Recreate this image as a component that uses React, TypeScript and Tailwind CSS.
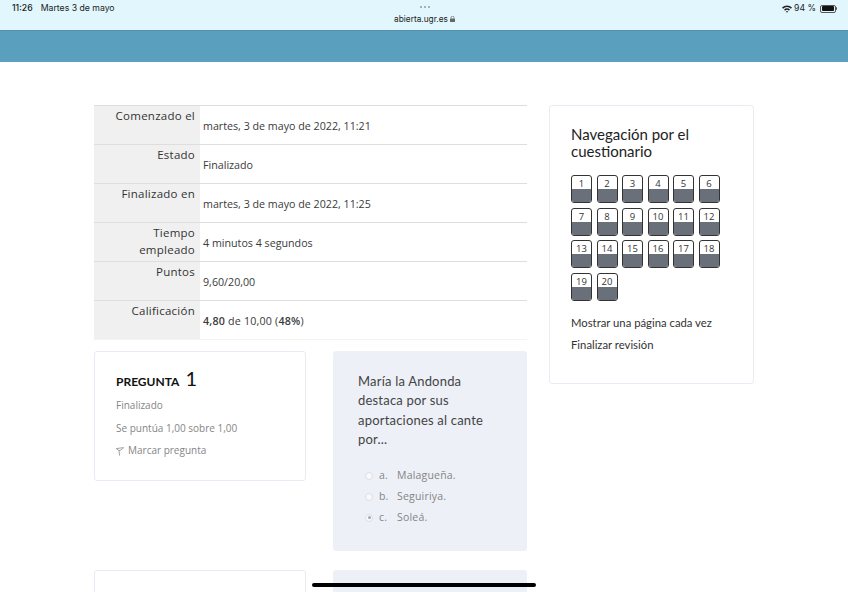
const openSans = '[font-family:"Open_Sans",sans-serif]';
const headFont = '[font-family:Lato,sans-serif]';

const summary = [
  { label: ['Comenzado el'], value: 'martes, 3 de mayo de 2022, 11:21' },
  { label: ['Estado'], value: 'Finalizado' },
  { label: ['Finalizado en'], value: 'martes, 3 de mayo de 2022, 11:25' },
  { label: ['Tiempo', 'empleado'], value: '4 minutos 4 segundos' },
  { label: ['Puntos'], value: '9,60/20,00' },
];

const answers = [
  { key: 'a.', text: 'Malagueña.' },
  { key: 'b.', text: 'Seguiriya.' },
  { key: 'c.', text: 'Soleá.', checked: true },
];

function SummaryRow({ label, children }: { label: string[]; children: React.ReactNode }) {
  return (
    <div className="flex h-[39px] border-t border-[#dedede]">
      <div className="w-[106px] shrink-0 bg-[#f0f0f0] pr-[5px] pt-[1px] text-right text-[11.5px] leading-[17px] tracking-[0.25px] text-[#333]">
        {label.map((l) => (
          <div key={l}>{l}</div>
        ))}
      </div>
      <div className="pl-[3px] pt-[13px] text-[10.7px] leading-[15px] text-[#3a3a3a]">{children}</div>
    </div>
  );
}

function QuizButton({ n }: { n: number }) {
  return (
    <div className="h-[28px] w-[21px] overflow-hidden rounded-[3px] border border-[#333] bg-white">
      <div className="h-[13px] pt-[2px] text-center text-[9.5px] leading-[11px] text-[#333]">{n}</div>
      <div className="h-[14px] bg-[#6a7079]" />
    </div>
  );
}

function FlagIcon() {
  return (
    <svg width="8" height="9" viewBox="0 0 8 9" fill="none" stroke="#8a8a8a" strokeWidth="0.8" className="mr-[4px] mt-[4px]">
      <path d="M0.3 1.6 L7.6 0.6 L5.2 3 L3 3.6 Z" />
      <path d="M3 3.6 L3.6 8.6" />
    </svg>
  );
}

export default function App() {
  return (
    <div className={`relative h-[592px] w-[848px] overflow-hidden bg-white ${openSans}`}>
      {/* status bar */}
      <div className="grid h-[30px] grid-cols-3 items-start bg-[#e1f7fd] pl-[12px] pr-[11px] pt-[3px] text-[8.7px] leading-[11px] text-[#222] [font-family:Inter,sans-serif]">
        <div className="flex gap-[8px]">
          <span className="font-medium">11:26</span>
          <span>Martes 3 de mayo</span>
        </div>
        <div className="flex flex-col items-center pt-[3px]">
          <div className="flex gap-[2px]">
            <span className="h-[2px] w-[2px] rounded-full bg-[#999]" />
            <span className="h-[2px] w-[2px] rounded-full bg-[#999]" />
            <span className="h-[2px] w-[2px] rounded-full bg-[#999]" />
          </div>
          <div className="mt-[6px] flex items-center gap-[2px] text-[8.3px] leading-[10px]">
            abierta.ugr.es
            <svg width="5" height="6" viewBox="0 0 5 6">
              <rect x="0" y="2.5" width="5" height="3.5" rx="0.5" fill="#666" />
              <path d="M1 2.5V1.6a1.5 1.5 0 0 1 3 0v0.9" fill="none" stroke="#666" strokeWidth="0.7" />
            </svg>
          </div>
        </div>
        <div className="flex items-center justify-end gap-[2px]">
          <svg width="10" height="8" viewBox="0 0 10 8" fill="#222">
            <path d="M0 2.6 A7 7 0 0 1 10 2.6 L8.9 3.7 A5.4 5.4 0 0 0 1.1 3.7 Z" />
            <path d="M2 4.6 A4.2 4.2 0 0 1 8 4.6 L6.9 5.7 A2.6 2.6 0 0 0 3.1 5.7 Z" />
            <path d="M3.9 6.6 A1.6 1.6 0 0 1 6.1 6.6 L5 7.8 Z" />
          </svg>
          <span>94 %</span>
          <div className="ml-[2px] flex items-center">
            <div className="h-[8px] w-[16px] rounded-[2px] border border-[#555] p-[0.5px]">
              <div className="h-full w-[94%] rounded-[1px] bg-[#111]" />
            </div>
            <div className="h-[3px] w-[1px] rounded-r-[1px] bg-[#555]" />
          </div>
        </div>
      </div>

      {/* header band */}
      <div className="h-[32px] border-t border-[#5692ad] bg-[#5b9fbe]" />

      {/* page body */}
      <div className="flex items-start pl-[94px] pt-[43px]">
        <div className="w-[433px] shrink-0">
          <div className="border-b border-[#f4f4f4]">
            {summary.map((row) => (
              <SummaryRow key={row.label[0]} label={row.label}>
                {row.value}
              </SummaryRow>
            ))}
            <SummaryRow label={['Calificación']}>
              <span className="tracking-[0.2px]">
                <b className="font-semibold">4,80</b> de 10,00 (<b className="font-semibold">48%</b>)
              </span>
            </SummaryRow>
          </div>

          {/* pregunta 1 */}
          <div className="mt-[11px] flex items-start">
            <div className="h-[130px] w-[212px] shrink-0 rounded-[3px] border border-[#e9ebf5] px-[21px] pt-[15px]">
              <div className={`flex items-baseline gap-[6px] text-[#111] ${headFont}`}>
                <span className="text-[12px] font-bold leading-[22px]">PREGUNTA</span>
                <span className="text-[20px] leading-[22px]">1</span>
              </div>
              <div className="mt-[5px] flex flex-col gap-[7.5px] text-[10px] leading-[15px] text-[#858585]">
                <div>Finalizado</div>
                <div>Se puntúa 1,00 sobre 1,00</div>
                <div className="flex items-start">
                  <FlagIcon />
                  Marcar pregunta
                </div>
              </div>
            </div>
            <div className="ml-[27px] h-[200px] w-[194px] shrink-0 rounded-[3px] bg-[#edf0f7] pl-[25px] pr-[20px] pt-[21px]">
              <p className={`text-[13px] leading-[19.3px] tracking-[0.2px] text-[#444] ${headFont}`}>
                María la Andonda destaca por sus aportaciones al cante por...
              </p>
              <div className="ml-[7px] mt-[19px] flex flex-col gap-[6px] text-[10.5px] leading-[15px] tracking-[0.2px] text-[#858585]">
                {answers.map((a) => (
                  <div key={a.key} className="flex items-center">
                    <span className="flex h-[8px] w-[8px] items-center justify-center rounded-full border border-[#dcdee6] bg-[#f8f9fb]">
                      {a.checked && <span className="h-[3px] w-[3px] rounded-full bg-[#a5a7ad]" />}
                    </span>
                    <span className="ml-[6px] w-[18px]">{a.key}</span>
                    <span>{a.text}</span>
                  </div>
                ))}
              </div>
            </div>
          </div>

          {/* pregunta 2, cut off by the viewport */}
          <div className="mt-[19px] flex items-start">
            <div className="h-[60px] w-[212px] shrink-0 rounded-[3px] border border-[#e9ebf5]" />
            <div className="ml-[27px] h-[60px] w-[194px] shrink-0 rounded-[3px] bg-[#edf0f7]" />
          </div>
        </div>

        {/* navegacion */}
        <div className="ml-[22px] h-[279px] w-[205px] shrink-0 rounded-[3px] border border-[#e9ebf5] pl-[21px] pt-[20px]">
          <h3 className={`text-[15px] font-normal leading-[17px] text-[#222] ${headFont}`}>
            Navegación por el
            <br />
            cuestionario
          </h3>
          <div className="mt-[15px] grid w-[160px] grid-cols-[repeat(6,21px)] gap-x-[4.5px] gap-y-[4.5px]">
            {Array.from({ length: 20 }, (_, i) => (
              <QuizButton key={i} n={i + 1} />
            ))}
          </div>
          <div className={`mt-[14px] flex flex-col gap-[7px] text-[11.3px] leading-[15px] text-[#333] ${headFont}`}>
            <div>Mostrar una página cada vez</div>
            <div>Finalizar revisión</div>
          </div>
        </div>
      </div>

      {/* home indicator */}
      <div className="absolute left-[312px] top-[583px] h-[4px] w-[224px] rounded-full bg-black" />
    </div>
  );
}
